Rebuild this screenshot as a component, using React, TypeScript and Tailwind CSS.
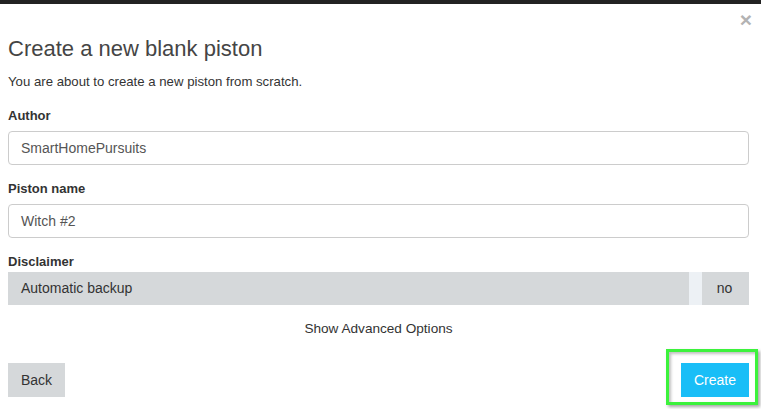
import React from "react";

const fields = [
    { label: "Author", value: "SmartHomePursuits" },
    { label: "Piston name", value: "Witch #2" },
];

export default function App() {
    return (
        <div className="w-[761px] h-[409px] overflow-hidden bg-white font-['Liberation_Sans',Arial,sans-serif] text-[#333]">
            <div className="h-[4px] bg-[#222]" />
            <div className="flex h-[33px] items-start justify-end pr-[9px] pt-[5px]">
                <button className="text-[21px] font-bold leading-none text-[#b3b3b3]">×</button>
            </div>
            <div className="w-[741px] ml-[8px]">
                <h4 className="text-[22px] leading-[24px] text-[#454545]">Create a new blank piston</h4>
                <p className="mt-[12px] text-[13.2px] leading-[18px]">You are about to create a new piston from scratch.</p>

                <div className="mt-[16px] flex flex-col gap-[15px]">
                    {fields.map((f) => (
                        <div key={f.label}>
                            <label className="block mb-[6px] text-[13px] font-bold leading-[18px]">{f.label}</label>
                            <div className="flex h-[34px] items-center rounded-[4px] border border-[#ccc] px-[12px] text-[14px] text-[#555]">
                                {f.value}
                            </div>
                        </div>
                    ))}
                    <div>
                        <label className="block mb-[1px] text-[13px] font-bold leading-[18px]">Disclaimer</label>
                        <div className="flex h-[33px] items-stretch bg-[#d5d8da] text-[14px]">
                            <div className="flex flex-1 items-center pl-[13px]">Automatic backup</div>
                            <div className="w-[13px] bg-[#edf1f5]" />
                            <div className="flex w-[47px] items-center justify-center pr-[2px]">no</div>
                        </div>
                    </div>
                </div>

                <div className="mt-[15px] text-center text-[13.6px] leading-[18px]">Show Advanced Options</div>

                <div className="mt-[25px] flex items-center justify-between">
                    <button className="h-[34px] w-[57px] bg-[#d5d8da] text-[14px] text-[#333]">Back</button>
                    <div className="relative">
                        <button className="h-[34px] w-[68px] bg-[#19bef7] text-[14px] text-white">Create</button>
                        {/* highlight marker around the create button */}
                        <div className="absolute left-[-15px] top-[-14px] h-[56px] w-[92px] border-[3px] border-[#3cf23c] shadow-[2px_2px_3px_rgba(0,0,0,0.35),inset_2px_2px_3px_rgba(0,0,0,0.25)]" />
                    </div>
                </div>
            </div>
        </div>
    );
}
